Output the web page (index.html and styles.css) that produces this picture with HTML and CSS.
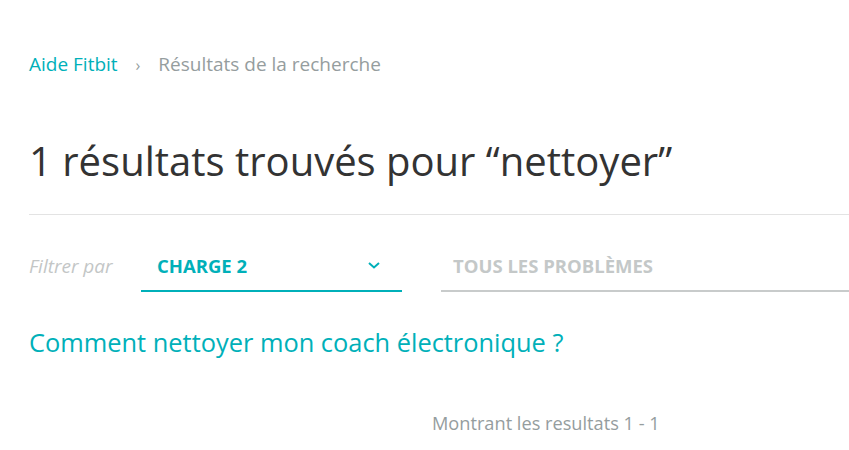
FILE: index.html
```html
<!DOCTYPE html>
<html lang="fr">
<head>
  <meta charset="UTF-8" />
  <meta name="viewport" content="width=device-width, initial-scale=1.0"/>
  <title>Aide Fitbit - Résultats de la recherche</title>
  <link rel="stylesheet" href="styles.css">
</head>
<body>

  <div class="page">
    <nav class="breadcrumb">
      <a href="#">Aide Fitbit</a>
      <span class="sep">›</span>
      <span class="current">Résultats de la recherche</span>
    </nav>

    <h1>1 résultats trouvés pour “nettoyer”</h1>

    <div class="filters">
      <span class="filter-label">Filtrer par</span>
      <div class="select active">
        <span>CHARGE 2</span>
        <svg class="chevron" width="12" height="7" viewBox="0 0 12 7">
          <path d="M1 1l5 4.5L11 1" fill="none" stroke="#00b0b9" stroke-width="2"/>
        </svg>
      </div>
      <div class="select muted">
        <span>TOUS LES PROBLÈMES</span>
      </div>
    </div>

    <ul class="results">
      <li><a href="#">Comment nettoyer mon coach électronique ?</a></li>
    </ul>

    <p class="count">Montrant les resultats 1 - 1</p>
  </div>

</body>
</html>
```

FILE: styles.css
```css
* {
  box-sizing: border-box;
}

body {
  font-family: 'Open Sans', Lato, sans-serif;
  background: #ffffff;
  margin: 0;
  padding: 0;
  overflow: hidden;
}

.page {
  padding: 50px 0 0 29px;
}

.breadcrumb {
  font-size: 19px;
  line-height: 28px;
  color: #959d9e;
}

.breadcrumb a {
  color: #00b0b9;
  text-decoration: none;
}

.breadcrumb .sep {
  margin: 0 13px;
  font-size: 16px;
}

h1 {
  font-size: 40px;
  font-weight: 400;
  color: #333333;
  margin: 56px 0 0;
  line-height: 52px;
  padding-bottom: 27px;
  border-bottom: 1px solid #e3e3e3;
}

.filters {
  display: flex;
  align-items: flex-end;
  margin-top: 25px;
}

.filter-label {
  font-style: italic;
  font-size: 19px;
  color: #c3c6c6;
  width: 112px;
  padding-bottom: 13px;
}

.select {
  display: flex;
  align-items: center;
  justify-content: space-between;
  height: 52px;
  padding: 0 16px;
  font-size: 18.5px;
  font-weight: 700;
  border-bottom: 2px solid #c8cbcb;
}

.select.active {
  width: 261px;
  color: #00b0b9;
  border-bottom-color: #00b0b9;
  padding-right: 22px;
}

.select.muted {
  flex: 1;
  margin-left: 39px;
  padding-left: 12px;
  color: #c4c8c8;
}

.results {
  list-style: none;
  margin: 34px 0 0;
  padding: 0;
}

.results a {
  font-size: 25.4px;
  line-height: 32px;
  color: #00b0b9;
  text-decoration: none;
}

.count {
  margin: 53px 0 0 403px;
  font-size: 18.2px;
  line-height: 24px;
  color: #959d9e;
}
```
